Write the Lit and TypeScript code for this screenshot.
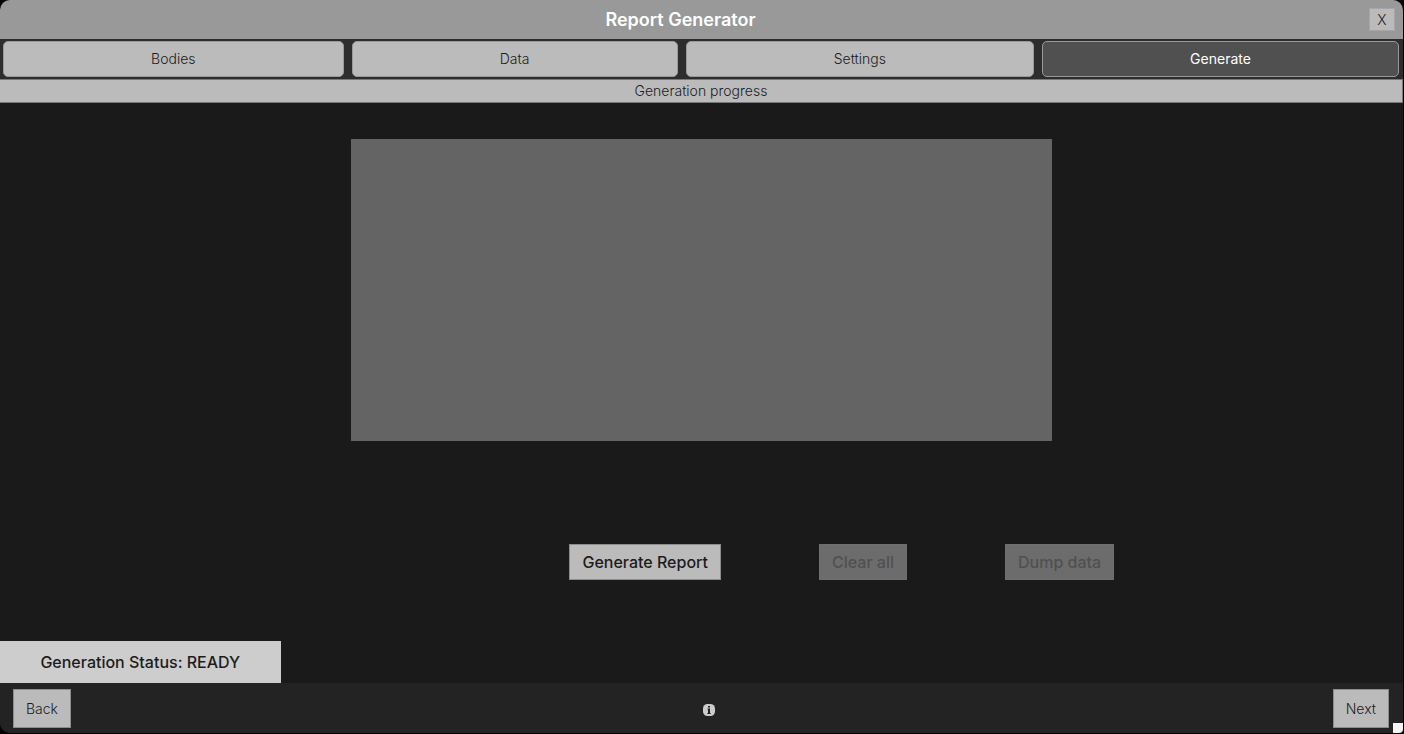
import { LitElement, html, css } from "lit";
import { customElement, state } from "lit/decorators.js";
import { classMap } from "lit/directives/class-map.js";

const TABS = ["Bodies", "Data", "Settings", "Generate"];

@customElement("app-root")
export class AppRoot extends LitElement {
  static styles = css`
    :host {
      display: block;
      background: #000;
      color: #1c1c1c;
      font: 300 14px/20px Inter, sans-serif;
    }
    * {
      box-sizing: border-box;
    }
    button {
      margin: 0;
      border: 1px solid #8c8c8c;
      border-radius: 0;
      background: #bbb;
      color: inherit;
      font: inherit;
    }
    .shell {
      position: relative;
      padding: 0 1px 1px 0;
    }
    .window {
      display: flex;
      flex-direction: column;
      min-height: calc(100vh - 1px);
      border-radius: 10px;
      overflow: hidden;
      background: #1a1a1a;
    }
    .titlebar {
      display: flex;
      align-items: center;
      height: 39px;
      padding-right: 8px;
      background: #999;
    }
    h1 {
      flex: 1;
      margin: 0;
      padding-right: 8px;
      color: #fff;
      font-size: 18px;
      font-weight: 600;
      text-align: center;
    }
    .close {
      width: 26px;
      height: 23px;
      padding: 0;
      border-color: #a6a6a6;
      line-height: 18px;
    }
    .tabs {
      display: flex;
      gap: 8px;
      padding: 2px 4px 2px 3px;
      background: #2d2d2d;
    }
    .tab {
      flex: 1 1 auto;
      height: 36px;
      padding: 0;
      border-color: #999;
      border-radius: 5px;
    }
    .tab.active {
      background: #505050;
      color: #fff;
      font-weight: 400;
    }
    h2 {
      margin: 0;
      border: 1px solid #777;
      border-left: 0;
      background: #bbb;
      font-size: 14px;
      font-weight: 300;
      line-height: 22px;
      text-align: center;
    }
    main {
      display: flex;
      flex: 1;
      flex-direction: column;
    }
    .log {
      align-self: center;
      width: 50%;
      height: 302px;
      margin: 36px 0 0;
      background: #646464;
    }
    .actions {
      display: flex;
      justify-content: space-evenly;
      width: 66%;
      margin: 0 auto;
    }
    .panel {
      margin: 103px 0 0 20%;
    }
    .action {
      height: 36px;
      padding: 0 12px;
      font-size: 16px;
      font-weight: 500;
    }
    .action:disabled {
      border-color: #6f6f6f;
      background: #6c6c6c;
      color: #505050;
    }
    .status {
      width: 20%;
      margin-top: auto;
      padding: 11px 0;
      background: #cdcdcd;
      font-size: 16px;
      font-weight: 500;
      text-align: center;
    }
    footer {
      display: flex;
      align-items: center;
      justify-content: space-between;
      height: 50px;
      padding: 0 14px 0 13px;
      background: #232323;
    }
    .nav {
      height: 39px;
      padding: 1px 12px 0;
    }
    .info {
      display: flex;
      padding: 3px 0 0 15px;
      border: 0;
      background: none;
    }
    .grip {
      position: absolute;
      right: 1px;
      bottom: 1px;
      width: 10px;
      height: 10px;
      border-bottom-right-radius: 4px;
      background: #f5f5f5;
    }
  `;

  @state() private active = "Generate";

  render() {
    return html`
      <div class="shell">
        <div class="window">
          <header class="titlebar">
            <h1>Report Generator</h1>
            <button class="close" aria-label="Close">X</button>
          </header>
          <nav class="tabs">
            ${TABS.map(
              (name) => html`<button
                class=${classMap({ tab: true, active: name === this.active })}
                @click=${() => (this.active = name)}
              >${name}</button>`
            )}
          </nav>
          <h2>Generation progress</h2>
          <main>
            <div class="log" role="log"></div>
            <div class="panel">
              <div class="actions">
                <button class="action">Generate Report</button>
                <button class="action" disabled>Clear all</button>
                <button class="action" disabled>Dump data</button>
              </div>
            </div>
            <div class="status" role="status">Generation Status: READY</div>
          </main>
          <footer>
            <button class="nav">Back</button>
            <button class="info" aria-label="Information">
              <svg width="12" height="12" viewBox="0 0 12 12">
                <rect width="12" height="12" rx="4.5" fill="#ccc" />
                <path d="M5 2h2v1.5H5zM4.5 4.5H7V9h.7v1H4.3V9H5V5.5h-.5z" fill="#232323" />
              </svg>
            </button>
            <button class="nav">Next</button>
          </footer>
        </div>
        <div class="grip"></div>
      </div>
    `;
  }
}
